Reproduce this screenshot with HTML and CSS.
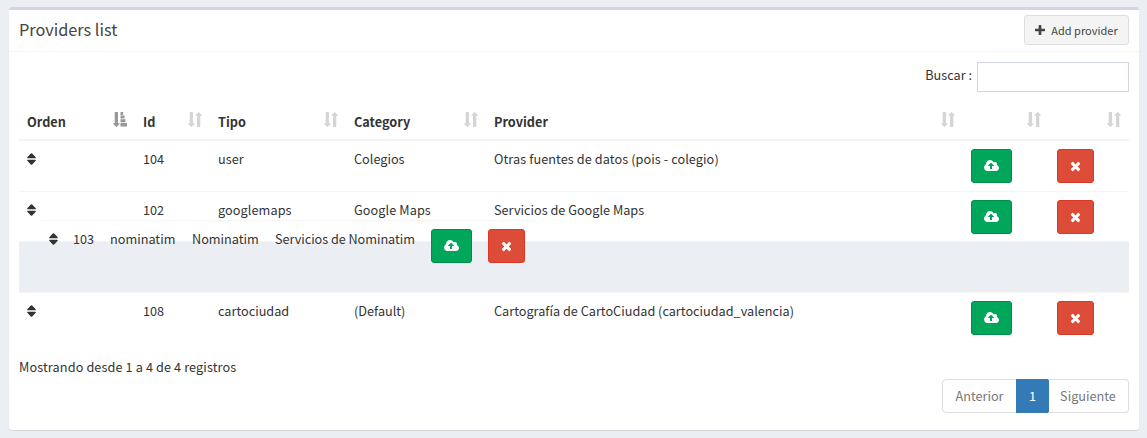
FILE: index.html
```html
<!DOCTYPE html>
<html lang="es">
<head>
<meta charset="utf-8">
<title>Providers list</title>
<link rel="stylesheet" href="styles.css">
</head>
<body>
<svg class="defs" aria-hidden="true">
  <symbol id="plus" viewBox="192 128 1408 1408"><path d="M1600 736v192q0 40-28 68t-68 28h-416v416q0 40-28 68t-68 28h-192q-40 0-68-28t-28-68v-416h-416q-40 0-68-28t-28-68v-192q0-40 28-68t68-28h416v-416q0-40 28-68t68-28h192q40 0 68 28t28 68v416h416q40 0 68 28t28 68z"/></symbol>
  <symbol id="times" viewBox="192 0 1408 1792"><path d="M1490 1322q0 40-28 68l-136 136q-28 28-68 28t-68-28l-294-294-294 294q-28 28-68 28t-68-28l-136-136q-28-28-28-68t28-68l294-294-294-294q-28-28-28-68t28-68l136-136q28-28 68-28t68 28l294 294 294-294q28-28 68-28t68 28l136 136q28 28 28 68t-28 68l-294 294 294 294q28 28 28 68z"/></symbol>
  <symbol id="cloud" viewBox="-64 0 1920 1792"><path d="M1216 864q0-14-9-23l-352-352q-9-9-23-9t-23 9l-351 351q-10 12-10 24 0 14 9 23t23 9h224v352q0 13 9.5 22.5t22.5 9.5h192q13 0 22.5-9.5t9.5-22.5v-352h224q13 0 22.5-9.5t9.5-22.5zm640 288q0 159-112.5 271.5t-271.5 112.5h-1088q-185 0-316.5-131.5t-131.5-316.5q0-130 70-240t188-165q-2-30-2-43 0-212 150-362t362-150q156 0 285.5 87t188.5 231q71-62 166-62 106 0 181 75t75 181q0 76-41 138 130 31 213.5 135.5t83.5 238.5z"/></symbol>
  <symbol id="grip" viewBox="0 0 9 12"><path d="M4.500 .3q.4 0 .7.3l3.500 3.600q.4 1-.6 1H.9q-1 0-.6-1L3.800.6q.3-.3.700-.3zM.9 6.800h7.200q1 0 .6 1l-3.500 3.600q-.7.600-1.400 0L.3 7.800q-.4-1 .6-1z"/></symbol>
  <symbol id="sort" viewBox="0 0 14 15"><path d="M1.700 .5q0-.5.5-.5h2.300q.5 0 .5.500V11.200h1.300q.8 0 .4.600L3.800 14.700q-.4.500-.8 0L.1 11.800q-.4-.6.4-.6h1.200zM9 14.500q0 .5.500.5h2.300q.5 0 .5-.5V3.800h1.200q.8 0 .4-.6L11 .3q-.4-.5-.8 0L7.400 3.200q-.4.600.4.600H9z"/></symbol>
  <symbol id="asc" viewBox="0 0 14 15"><path d="M1.700 .5q0-.5.5-.5h2.300q.5 0 .5.500V11.200h1.300q.8 0 .4.600L3.800 14.700q-.4.500-.8 0L.1 11.800q-.4-.6.4-.6h1.200zM7.500 0h2.700v3H7.500zM7.500 3.600h4v3h-4zM7.500 7.300h5v3h-5zM7.500 11H14v3.400H7.500z"/></symbol>
</svg>
<main class="box">
  <header class="box-header">
    <h3 class="box-title">Providers list</h3>
    <button class="add"><svg class="i-plus"><use href="#plus"/></svg>Add provider</button>
  </header>
  <div class="box-body">
    <label class="search">Buscar :<input type="text"></label>
    <section class="table">
      <div class="row head">
        <div>Orden<svg class="s active"><use href="#asc"/></svg></div>
        <div>Id<svg class="s"><use href="#sort"/></svg></div>
        <div>Tipo<svg class="s"><use href="#sort"/></svg></div>
        <div>Category<svg class="s"><use href="#sort"/></svg></div>
        <div>Provider<svg class="s"><use href="#sort"/></svg></div>
        <div><svg class="s"><use href="#sort"/></svg></div>
        <div><svg class="s"><use href="#sort"/></svg></div>
      </div>
      <div class="row">
        <div><svg class="grip"><use href="#grip"/></svg></div><div>104</div><div>user</div><div>Colegios</div><div class="loose">Otras fuentes de datos (pois - colegio)</div>
        <div><button class="btn up"><svg class="i-cloud"><use href="#cloud"/></svg></button></div>
        <div><button class="btn del"><svg class="i-times"><use href="#times"/></svg></button></div>
      </div>
      <div class="row short">
        <div><svg class="grip"><use href="#grip"/></svg></div><div>102</div><div class="loose">googlemaps</div><div class="loose">Google Maps</div><div>Servicios de Google Maps</div>
        <div><button class="btn up"><svg class="i-cloud"><use href="#cloud"/></svg></button></div>
        <div><button class="btn del"><svg class="i-times"><use href="#times"/></svg></button></div>
      </div>
      <div class="row placeholder"></div>
      <div class="row">
        <div><svg class="grip"><use href="#grip"/></svg></div><div>108</div><div>cartociudad</div><div>(Default)</div><div>Cartografía de CartoCiudad (cartociudad_valencia)</div>
        <div><button class="btn up"><svg class="i-cloud"><use href="#cloud"/></svg></button></div>
        <div><button class="btn del"><svg class="i-times"><use href="#times"/></svg></button></div>
      </div>
      <div class="row dragged">
        <div><svg class="grip"><use href="#grip"/></svg></div><div>103</div><div>nominatim</div><div>Nominatim</div><div class="tight">Servicios de Nominatim</div>
        <div><button class="btn up"><svg class="i-cloud"><use href="#cloud"/></svg></button></div>
        <div><button class="btn del"><svg class="i-times"><use href="#times"/></svg></button></div>
      </div>
    </section>
    <footer>
      <div class="info">Mostrando desde 1 a 4 de 4 registros</div>
      <nav class="pages"><a class="prev">Anterior</a><a class="current">1</a><a class="next">Siguiente</a></nav>
    </footer>
  </div>
</main>
</body>
</html>
```

FILE: styles.css
```css
* { box-sizing: border-box; }
body {
  margin: 0;
  padding: 7px 8px 8px 9px;
  height: 438px;
  overflow: hidden;
  background: #ebeef3;
  color: #333;
  font: 12.7px/20px "Source Sans Pro", "Noto Sans CJK SC", sans-serif;
}
.defs { position: absolute; width: 0; height: 0; }
svg { fill: currentColor; display: block; }
button, input { font: inherit; margin: 0; }
.box {
  height: 423px;
  background: #fff;
  border-top: 3px solid #d2d6de;
  border-radius: 3px;
  box-shadow: 0 1px 1px rgba(0, 0, 0, .1);
}
.box-header {
  display: flex;
  justify-content: space-between;
  height: 42px;
  padding: 5px 10px;
  border-bottom: 1px solid #f4f4f4;
}
.box-title {
  margin: 4px 0 0;
  color: #444;
  font-size: 16.3px;
  font-weight: 400;
  line-height: 20px;
}
.add {
  display: flex;
  align-items: center;
  justify-content: center;
  gap: 6px;
  width: 105px;
  height: 30px;
  padding: 0;
  border: 1px solid #ddd;
  border-radius: 3px;
  background: #f4f4f4;
  color: #444;
  font-size: 11px;
  white-space: nowrap;
}
.i-plus { width: 10px; height: 10px; }
.i-cloud { width: 15px; height: 14px; }
.i-times { width: 11px; height: 14px; }
.box-body { padding: 10px; }
.search { display: flex; justify-content: flex-end; line-height: 25px; gap: 5px; }
.search input {
  width: 152px;
  height: 30px;
  border: 1px solid #d2d6de;
  background: #fff;
}
.table { position: relative; padding-top: 11px; }
.row {
  display: grid;
  grid-template-columns: 116px 75px 136px 140px 477px 86px 80px;
  height: 51px;
  border-top: 1px solid #f4f4f4;
  white-space: nowrap;
}
.row > div { padding: 8px; }
.row > .loose { letter-spacing: .08px; }
.row > .tight { letter-spacing: -.05px; }
.head { height: 38px; border-top: 0; border-bottom: 2px solid #f4f4f4; font-weight: 700; }
.row.head > div { display: flex; justify-content: space-between; padding-top: 9px; }
.head + .row { height: 50px; border-top: 0; }
.s { width: 14px; height: 15px; margin-left: auto; opacity: .2; }
.s.active { opacity: .5; }
.short { height: 50px; }
.row.placeholder { background: #ebeef3; }
.grip { width: 9px; height: 12px; margin-top: 4px; }
.btn {
  display: flex;
  align-items: center;
  justify-content: center;
  height: 34px;
  padding: 0;
  border: 1px solid;
  border-radius: 3px;
}
.btn svg { color: #fff; }
.up { width: 41px; background: #00a65a; border-color: #008d4c; }
.del { width: 37px; background: #dd4b39; border-color: #d73925; }
.row.dragged {
  position: absolute;
  left: 22px;
  top: 128px;
  width: 492px;
  grid-template-columns: 24px 37px 82px 83px 156px 57px 53px;
}
footer { display: flex; justify-content: space-between; padding-top: 14px; }
.info { letter-spacing: .11px; }
.pages { display: flex; margin-top: 22px; color: #777; line-height: 32px; text-align: center; }
.pages a { height: 34px; border: 1px solid #ddd; }
.prev { width: 75px; border-radius: 4px 0 0 4px; }
.pages .current { width: 33px; margin-left: -1px; background: #337ab7; border-color: #337ab7; color: #fff; }
.pages .next { width: 81px; margin-left: -1px; border-left: 0; border-radius: 0 4px 4px 0; }
```
